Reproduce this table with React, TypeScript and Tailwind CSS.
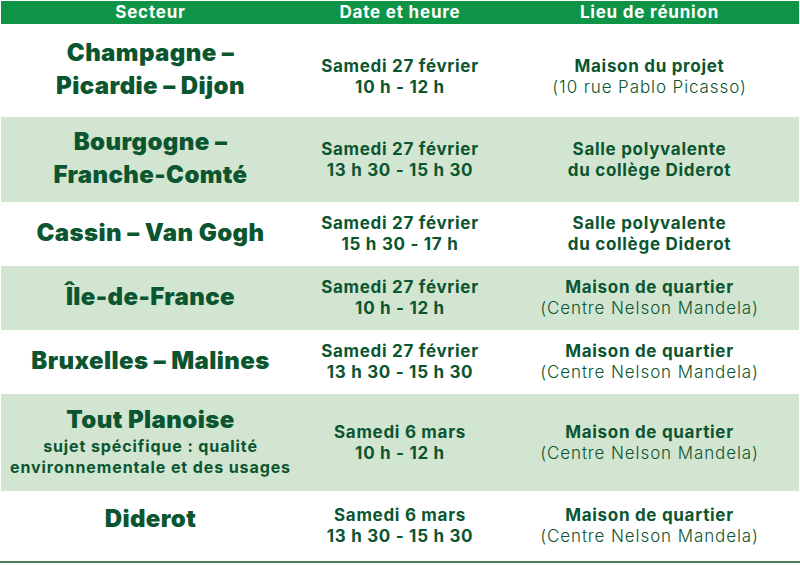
import React from "react";

type Row = {
  h: string;
  shade: boolean;
  sector: React.ReactNode;
  sectorPad?: string;
  infoPad?: string;
  date: string;
  time: string;
  place: string;
  detail: string;
};

const rows: Row[] = [
  {
    h: "h-[93px]",
    shade: false,
    sector: (
      <>
        Champagne –<br />
        Picardie – Dijon
      </>
    ),
    infoPad: "pt-3",
    date: "Samedi 27 février",
    time: "10 h - 12 h",
    place: "Maison du projet",
    detail: "(10 rue Pablo Picasso)",
  },
  {
    h: "h-[85px]",
    shade: true,
    sector: (
      <>
        Bourgogne –<br />
        Franche-Comté
      </>
    ),
    date: "Samedi 27 février",
    time: "13 h 30 - 15 h 30",
    place: "Salle polyvalente",
    detail: "du collège Diderot",
  },
  {
    h: "h-[64px]",
    shade: false,
    sector: <>Cassin – Van Gogh</>,
    date: "Samedi 27 février",
    time: "15 h 30 - 17 h",
    place: "Salle polyvalente",
    detail: "du collège Diderot",
  },
  {
    h: "h-[64px]",
    shade: true,
    sector: <>Île-de-France</>,
    date: "Samedi 27 février",
    time: "10 h - 12 h",
    place: "Maison de quartier",
    detail: "(Centre Nelson Mandela)",
  },
  {
    h: "h-[64px]",
    shade: false,
    sector: <>Bruxelles – Malines</>,
    date: "Samedi 27 février",
    time: "13 h 30 - 15 h 30",
    place: "Maison de quartier",
    detail: "(Centre Nelson Mandela)",
  },
  {
    h: "h-[97px]",
    shade: true,
    sector: (
      <>
        Tout Planoise
        <span className="block text-[16px] leading-[21px] font-bold tracking-[0.9px]">
          sujet spécifique : qualité
          <br />
          environnementale et des usages
        </span>
      </>
    ),
    date: "Samedi 6 mars",
    time: "10 h - 12 h",
    place: "Maison de quartier",
    detail: "(Centre Nelson Mandela)",
  },
  {
    h: "h-[70px]",
    shade: false,
    sector: <>Diderot</>,
    sectorPad: "pb-4",
    date: "Samedi 6 mars",
    time: "13 h 30 - 15 h 30",
    place: "Maison de quartier",
    detail: "(Centre Nelson Mandela)",
  },
];

export default function App() {
  return (
    <div
      className="w-[800px] h-[565px] bg-white pt-px text-[#0b5530]"
      style={{ fontFamily: "Inter, 'Noto Sans', sans-serif" }}
    >
      <div className="mx-px grid grid-cols-[299px_200px_1fr] h-[23px] bg-[#0d9446] text-white text-[17px] font-bold tracking-[0.8px] leading-[23px] text-center">
        <span>Secteur</span>
        <span>Date et heure</span>
        <span>Lieu de réunion</span>
      </div>
      {rows.map((r, i) => (
        <div
          key={i}
          className={`grid grid-cols-[299px_200px_1fr] items-center text-center ${r.h} ${
            r.shade ? "bg-[#d2e5d1] mx-px" : "mx-px"
          }`}
        >
          <div
            className={`text-[24px] leading-[33px] font-black tracking-[0.4px] whitespace-nowrap ${
              r.sectorPad ?? "pb-1"
            }`}
          >
            {r.sector}
          </div>
          <div
            className={`text-[17px] leading-[21px] font-bold tracking-[0.7px] whitespace-nowrap ${
              r.infoPad ?? ""
            }`}
          >
            <div>{r.date}</div>
            <div>{r.time}</div>
          </div>
          <div
            className={`text-[17px] leading-[21px] whitespace-nowrap ${
              r.infoPad ?? ""
            }`}
          >
            <div className="font-bold tracking-[0.7px]">{r.place}</div>
            <div
              className={
                r.detail.startsWith("(")
                  ? "font-light tracking-[0.9px]"
                  : "font-bold tracking-[0.7px]"
              }
            >
              {r.detail}
            </div>
          </div>
        </div>
      ))}
      <div className="h-[2px] bg-[#4f7a5f]" />
    </div>
  );
}
